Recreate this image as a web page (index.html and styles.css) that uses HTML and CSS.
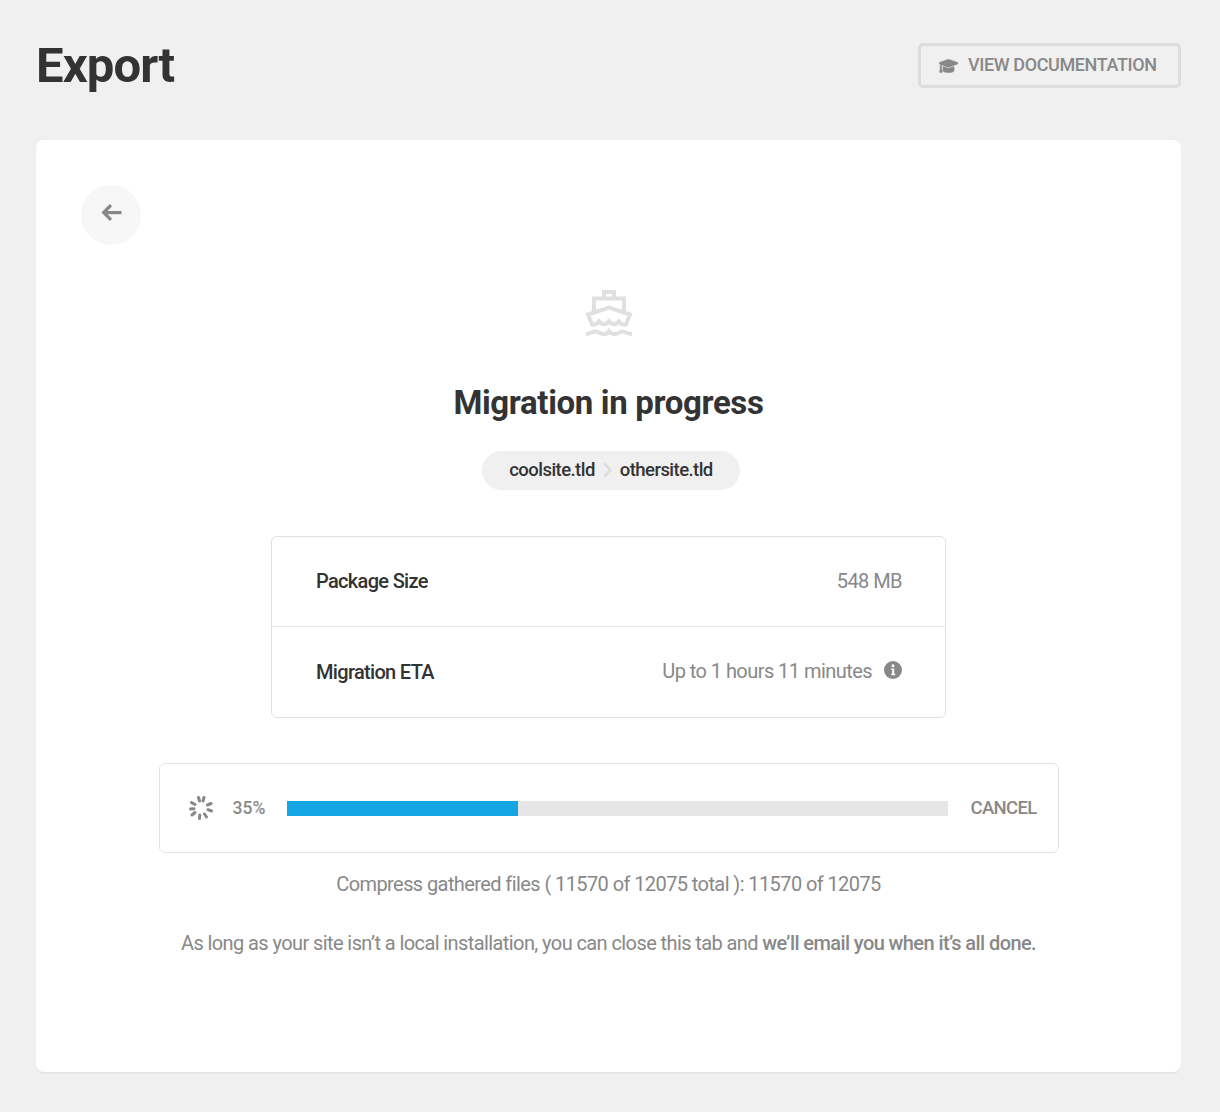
FILE: index.html
```html
<!DOCTYPE html>
<html lang="en">
<head>
<meta charset="utf-8">
<title>Export</title>
<link rel="stylesheet" href="styles.css">
</head>
<body>
<div class="page">
  <header class="top">
    <h1 class="title">Export</h1>
    <a class="doc-btn" href="#">
      <svg class="doc-icon" viewBox="0 50 640 410" preserveAspectRatio="none"><path d="M622.340 153.200 343.400 67.500c-15.200-4.670-31.600-4.670-46.790 0L17.660 153.200c-23.540 7.230-23.540 38.360 0 45.590l48.630 14.940c-10.670 13.190-17.230 29.280-17.880 46.900C38.780 266.150 32 276.110 32 288c0 10.780 5.680 19.850 13.860 25.650L20.330 428.530C18.110 438.520 25.710 448 35.940 448h56.110c10.240 0 17.840-9.480 15.620-19.470L82.140 313.650C90.320 307.850 96 298.780 96 288c0-11.570-6.470-21.250-15.660-26.870.76-15.020 8.440-28.300 20.690-36.720L296.600 284.500c9.060 2.780 26.440 6.250 46.790 0l278.950-85.700c23.550-7.240 23.550-38.360 0-45.600zM352.790 315.090c-28.530 8.760-52.840 3.920-65.590 0l-145.020-44.550L128 384c0 35.350 85.960 64 192 64s192-28.650 192-64l-14.180-113.470-145.030 44.560z"/></svg>
      <span>VIEW DOCUMENTATION</span>
    </a>
  </header>

  <main class="card">
    <a class="back" href="#" aria-label="Back">
      <svg class="back-icon" viewBox="0 0 24 24"><path d="M12 3.500 4 11.500l8 8M5 11.500h18.500"/></svg>
    </a>

    <div class="hero">
      <svg class="ship" viewBox="0 0 48 48">
        <path class="ship-line" d="M19 3h10v6.500H19zM9 23V9.500h30V23"/>
        <path class="ship-line" d="M3 25.500 24 18.500l21 7-4 10c-3 1-5-.5-7-3-2.500 3.500-7.500 3.500-10 0-2.500 3.500-7.500 3.500-10 0-2 2.500-4 4-7 3z"/>
        <path class="ship-line" d="M1 45c4.500 0 6-2.500 9-2.500S15 45 19 45s5-2.500 5-2.500S26 45 30 45s4-2.500 7-2.500 5 2.500 10 2.500"/>
      </svg>
      <h2 class="heading">Migration in progress</h2>
      <div class="route">
        <span>coolsite.tld</span>
        <svg class="chevron" viewBox="0 0 10 18"><path d="M1.500 1.500 8 9l-6.500 7.500"/></svg>
        <span>othersite.tld</span>
      </div>
    </div>

    <section class="info">
      <div class="info-row">
        <span class="info-label">Package Size</span>
        <span class="info-value">548 MB</span>
      </div>
      <div class="info-row">
        <span class="info-label">Migration ETA</span>
        <span class="info-value eta">Up to 1 hours 11 minutes
          <svg class="info-icon" viewBox="0 0 18 18"><circle cx="9" cy="9" r="9"/><circle class="info-glyph" cx="9" cy="4.800" r="1.500"/><path class="info-glyph" d="M7.200 7.500h3v5.200h1v1.500H7.200v-1.500h1V9h-1z"/></svg>
        </span>
      </div>
    </section>

    <section class="progress">
      <svg class="spinner" viewBox="0 0 24 24">
        <path d="M9.500 1.500 10.500 5M15 1.500 14 5M22 7.500l-3.500 1.500M22.500 15l-3.500-1.300M17.500 21 15.500 18M10.500 22.500l.3-3.500M3 19l3-2.500M1.500 13l3.500-.2M2.500 6.500 6 8.500"/>
      </svg>
      <span class="percent">35%</span>
      <div class="bar"><div class="bar-fill" style="width:35%"></div></div>
      <a class="cancel" href="#">CANCEL</a>
    </section>

    <p class="status">Compress gathered files ( 11570 of 12075 total ): 11570 of 12075</p>
    <p class="note">As long as your site isn’t a local installation, you can close this tab and <strong>we’ll email you when it’s all done.</strong></p>
  </main>
</div>
</body>
</html>
```

FILE: styles.css
```css
* { box-sizing: border-box; }
html, body { margin: 0; padding: 0; }
body {
  background: #f0f0f0;
  font-family: Roboto, "Liberation Sans", sans-serif;
  color: #888;
}
a { color: inherit; text-decoration: none; }
.page { padding: 0 39px 40px 36px; }
.top {
  display: flex;
  align-items: center;
  justify-content: space-between;
  height: 140px;
  padding-bottom: 9px;
}
.title {
  margin: 0;
  font-size: 49px;
  line-height: 52px;
  font-weight: 700;
  letter-spacing: -0.85px;
  color: #333;
}
.doc-btn {
  display: flex;
  align-items: center;
  gap: 10px;
  width: 263px;
  height: 45px;
  padding: 0 0 2px 18px;
  border: 3px solid #ddd;
  border-radius: 5px;
  font-size: 18px;
  font-weight: 500;
  letter-spacing: -0.38px;
  color: #888;
}
.doc-icon { width: 19px; height: 14px; fill: #888; stroke: #888; stroke-width: 18; margin-top: 2px; }
.card {
  height: 932px;
  padding: 45px 45px 0;
  background: #fff;
  border-radius: 8px;
  box-shadow: 0 2px 1px #e4e4e4;
}
.back {
  display: flex;
  align-items: center;
  justify-content: center;
  width: 60px;
  height: 60px;
  padding: 0 1px 5px 0;
  border-radius: 50%;
  background: #f7f7f7;
}
.back-icon {
  width: 22px;
  height: 22px;
  fill: none;
  stroke: #888;
  stroke-width: 3.500;
}
.hero {
  display: flex;
  flex-direction: column;
  align-items: center;
  margin-top: 44px;
}
.ship { width: 48px; height: 48px; }
.ship-line {
  fill: none;
  stroke: #e0e0e0;
  stroke-width: 4;
}
.heading {
  margin: 46px 0 0;
  font-size: 33px;
  line-height: 40px;
  font-weight: 700;
  letter-spacing: -0.35px;
  color: #333;
}
.route {
  display: flex;
  align-items: center;
  gap: 8px;
  height: 39px;
  margin: 28px 0 0 5px;
  padding: 0 27px 2px;
  border-radius: 20px;
  background: #f0f0f0;
  font-size: 18.500px;
  font-weight: 500;
  letter-spacing: -0.55px;
  color: #333;
}
.chevron {
  width: 9px;
  height: 16px;
  fill: none;
  stroke: #ddd;
  stroke-width: 3;
}
.info {
  width: 675px;
  margin: 46px auto 0;
  border: 1px solid #e0e0e0;
  border-radius: 6px;
}
.info-row {
  display: flex;
  align-items: center;
  justify-content: space-between;
  height: 89px;
  padding: 0 43px 0 44px;
  font-size: 20px;
  letter-spacing: -0.55px;
}
.info-row:first-child .info-label { margin-bottom: 2px; }
.info-row:first-child .info-value { margin-bottom: 2px; }
.info-row + .info-row { height: 91px; border-top: 1px solid #e8e8e8; }
.info-label { color: #333; font-weight: 500; letter-spacing: -0.68px; }
.info-value { color: #888; }
.eta { display: flex; align-items: center; gap: 12px; margin-bottom: 3px; }
.info-icon { width: 18px; height: 18px; fill: #888; margin-bottom: 2px; }
.info-glyph { fill: #fff; }
.progress {
  display: flex;
  align-items: center;
  width: 900px;
  height: 90px;
  margin: 45px auto 0;
  padding: 0 21px 0 29px;
  border: 1px solid #e4e4e4;
  border-radius: 6px;
}
.spinner {
  flex: none;
  width: 24px;
  height: 24px;
  fill: none;
  stroke: #888;
  stroke-width: 3;
  stroke-linecap: round;
}
.percent {
  flex: none;
  width: 54px;
  margin: 0 0 0 20px;
  font-size: 17.500px;
  font-weight: 500;
  letter-spacing: 0;
}
.bar { flex: 1; height: 15px; background: #e6e6e6; }
.bar-fill { height: 100%; background: #13a6e3; }
.cancel {
  flex: none;
  margin: 0 0 0 22px;
  font-size: 18.500px;
  letter-spacing: -0.66px;
  font-weight: 500;
}
.status, .note {
  margin: 0;
  text-align: center;
  font-size: 20px;
  letter-spacing: -0.59px;
  line-height: 24px;
}
.status { margin-top: 19px; }
.note { margin-top: 35px; }
.note strong { font-weight: 500; }
```
